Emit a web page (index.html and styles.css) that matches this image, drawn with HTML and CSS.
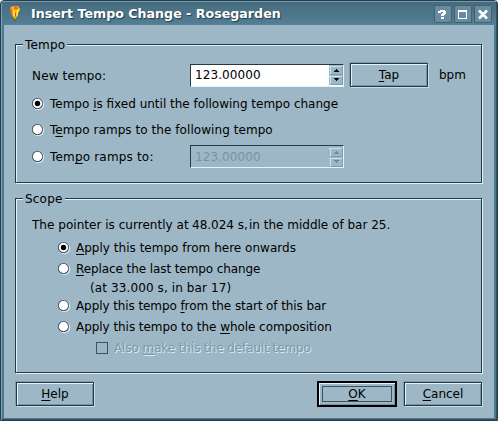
FILE: index.html
```html
<!DOCTYPE html>
<html lang="en">
<head>
<meta charset="utf-8">
<title>Insert Tempo Change - Rosegarden</title>
<link rel="stylesheet" href="styles.css">
</head>
<body>
<svg width="0" height="0" class="defs" aria-hidden="true">
  <symbol id="radio" viewBox="0 0 13 13">
    <circle cx="6.3" cy="6.3" r="6" fill="#cfe5ee"/>
    <circle cx="5.5" cy="5.5" r="5.5" fill="#2f3d48"/>
    <circle cx="5.5" cy="5.5" r="4.7" fill="#fff"/>
  </symbol>
  <symbol id="radio-on" viewBox="0 0 13 13">
    <use href="#radio"/>
    <circle cx="5.5" cy="5.5" r="2.7" fill="#000"/>
  </symbol>
  <symbol id="arrows" viewBox="0 0 14 20">
    <path d="M0 1.5H13M1.5 1V9M0 11.5H13M1.5 11V19" stroke="#c4e4ef" fill="none"/>
    <path d="M2 9.5H13.5V1M2 19.5H13.5V11" stroke="#8199a8" fill="none"/>
    <path d="M7 4h1v1h1v1h1v1H5V6h1V5h1zM5 13h5v1H9v1H8v1H7v-1H6v-1H5z" fill="currentColor"/>
  </symbol>
</svg>
<div class="window">
  <header class="titlebar">
    <svg class="rose" width="14" height="18" viewBox="0 0 14 18">
      <path d="M4 10l3 7 3-7z" fill="#526b18"/>
      <path d="M5 12l2 3 2-3z" fill="#b5a62c"/>
      <path d="M2 3l3-2 5 0 2 3-2 4 0 3-3 2-3-2-1-4z" fill="#f8b423"/>
      <path d="M2 3l2 1 1 7-2-2zM6 1l4 1-1 3-3-1z" fill="#ef6a1a"/>
      <path d="M5 5l2 1v6l-2-2zM9 5l3-1-2 4-1 3-1-1z" fill="#ffe14a"/>
      <path d="M7 7l1 1v4l-1-1z" fill="#e04c12"/>
    </svg>
    <h1>Insert Tempo Change - Rosegarden</h1>
    <div class="controls">
      <svg width="18" height="18"><path d="M6 5h5v1h1v3h-1v1h-1v1H7V9h1V8h1V7H7v1H4V6h2zM7 12h3v2H7z" fill="#fff"/></svg>
      <svg width="18" height="18"><path d="M4 5h9v9H4zM5 7v6h7V7z" fill="#fff" fill-rule="evenodd"/></svg>
      <svg width="18" height="18"><path d="M5 5.5l8 8M13 5.5l-8 8" stroke="#fff" stroke-width="2.5"/></svg>
    </div>
  </header>
  <main class="dialog">
    <section class="group tempo">
      <h2>Tempo</h2>
      <div class="row entry">
        <span class="name">New tempo:</span>
        <div class="spin"><span>123.00000</span><svg width="14" height="20"><use href="#arrows"/></svg></div>
        <button class="btn tap"><span><u>T</u>ap</span></button>
        <span class="unit">bpm</span>
      </div>
      <div class="row r1"><svg class="radio"><use href="#radio-on"/></svg><span>Tempo <u>i</u>s fixed until the following tempo change</span></div>
      <div class="row r2"><svg class="radio"><use href="#radio"/></svg><span>T<u>e</u>mpo ramps to the following tempo</span></div>
      <div class="row r3"><svg class="radio"><use href="#radio"/></svg><span class="ramp">Tem<u>p</u>o ramps to:</span>
        <div class="spin disabled"><span>123.00000</span><svg width="14" height="20"><use href="#arrows"/></svg></div>
      </div>
    </section>
    <section class="group scope">
      <h2>Scope</h2>
      <p class="row pointer"><span class="at">The pointer is currently at</span><span class="time">48.024 s,</span><span>in the middle of bar 25.</span></p>
      <div class="choices">
        <div class="row first"><svg class="radio"><use href="#radio-on"/></svg><span><u>A</u>pply this tempo from here onwards</span></div>
        <div class="row tight"><svg class="radio"><use href="#radio"/></svg><span><u>R</u>eplace the last tempo change</span></div>
        <div class="row note"><span>(at 33.000 s, in bar 17)</span></div>
        <div class="row tight"><svg class="radio"><use href="#radio"/></svg><span>Apply this tempo <u>f</u>rom the start of this bar</span></div>
        <div class="row whole"><svg class="radio"><use href="#radio"/></svg><span>Apply this tempo to the <u>w</u>hole composition</span></div>
        <div class="row tight check"><i class="box"></i><span>Also <u>m</u>ake this the default tempo</span></div>
      </div>
    </section>
    <footer class="actions">
      <button class="btn help"><span><u>H</u>elp</span></button>
      <button class="btn ok"><span><u>O</u>K</span></button>
      <button class="btn cancel"><span><u>C</u>ancel</span></button>
    </footer>
  </main>
</div>
</body>
</html>
```

FILE: styles.css
```css
* { box-sizing: border-box; }
body {
  margin: 0;
  background: #fff;
  font: 12px/16px "DejaVu Sans", sans-serif;
  color: #000;
}
.defs { position: absolute; }
.window {
  width: 498px;
  height: 421px;
  padding: 0 3px 3px;
  border: 1px solid #24404e;
  border-radius: 4px 4px 0 0;
  background: #4d7a90;
  box-shadow: inset 1px 1px #7ba1b2, inset -1px -1px #315261;
}
.titlebar {
  height: 24px;
  display: flex;
  align-items: center;
  padding: 1px 4px 0 6px;
  margin: 0 -2px;
  background: linear-gradient(#7399aa 0 1px, #466b7e 1px, #547f95);
}
.rose { margin-right: 9px; }
h1 {
  flex: 1;
  margin: 0;
  font: bold 12.65px/16px "DejaVu Sans", sans-serif;
  color: #fff;
  text-shadow: 1px 1px 1px #203b49;
  white-space: nowrap;
}
.controls { display: flex; gap: 2px; }
.controls svg {
  border-radius: 2px;
  background: #688c9e;
  box-shadow: inset 0 0 0 1px #3f6172;
}
.dialog {
  height: 393px;
  padding: 19px 11px 0;
  background: #9db7c6;
}
.group {
  width: 467px;
  border: 1px solid #283944;
  box-shadow: 1px 1px #e0f4fc, inset 1px 1px #e0f4fc;
}
.tempo { height: 139px; }
.scope { height: 175px; margin-top: 15px; }
h2 {
  width: max-content;
  height: 16px;
  margin: -8px 0 0 7px;
  padding: 0 2px;
  background: #9db7c6;
  font: inherit;
  letter-spacing: .2px;
}
.row { display: flex; align-items: center; white-space: nowrap; }
u { text-decoration: underline; text-underline-offset: 2px; text-decoration-thickness: 1px; text-decoration-skip-ink: none; }
.radio { width: 13px; height: 13px; margin: 1px 5px 0 0; flex: none; }
.entry { height: 26px; margin: 9px 0 0 16px; }
.name { width: 158px; padding-top: 1px; letter-spacing: .15px; }
.spin {
  width: 154px;
  height: 23px;
  display: flex;
  align-items: center;
  justify-content: space-between;
  padding-left: 4px;
  border: 1px solid;
  border-color: #283944 #e0f4fc #e0f4fc #283944;
  background: #fff;
}
.spin span { letter-spacing: .1px; }
.spin svg { background: #9db7c6; }
.disabled { background: #9db7c6; color: #7c939f; }
.disabled svg { color: #7f8386; }
.btn {
  width: 78px;
  height: 24px;
  padding: 0;
  display: flex;
  align-items: center;
  justify-content: center;
  border: 1px solid #283944;
  background: #9db7c6;
  font: inherit;
  color: #000;
  box-shadow: inset 1px 1px #e0f4fc, inset -1px -1px #78909f, 1px 1px #c2dce8, -1px -1px #8199a8;
}
.tap { margin: 0 11px 0 6px; }
.r1 { height: 26px; margin: 3px 0 0 16px; }
.r2 { height: 26px; margin-left: 16px; letter-spacing: .06px; }
.r3 { height: 27px; margin-left: 16px; }
.ramp { width: 140px; letter-spacing: .18px; }
.pointer { height: 20px; margin: 8px 0 0 16px; }
.at { width: 160px; letter-spacing: .03px; }
.time { width: 57px; }
.choices { padding: 2px 0 0 42px; }
.choices .row { height: 21px; }
.choices .first { letter-spacing: .02px; }
.choices .tight { letter-spacing: -.09px; }
.choices .whole { letter-spacing: -.05px; }
.choices .note { height: 16px; padding: 2px 0 0 32px; letter-spacing: .11px; }
.choices .check { padding-left: 38px; color: #8198a5; text-shadow: 1px 1px #d8ecf4; }
.box { width: 12px; height: 12px; margin-right: 6px; border: 1px solid #40505c; }
.actions { display: flex; padding-top: 9px; }
.help { margin-left: 1px; }
.ok {
  width: 80px;
  height: 26px;
  margin: -1px 7px 0 223px;
  padding: 3px;
  border: 2px solid #000;
  box-shadow: inset 1px 1px #e0f4fc, inset -1px -1px #78909f;
}
.ok > span { flex: 1; line-height: 14px; border: 1px solid #40505c; }
```
